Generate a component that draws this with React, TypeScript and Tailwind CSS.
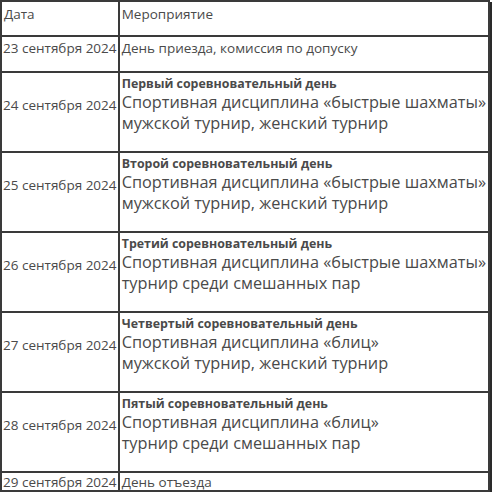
const ROWS = [
  { date: "24 сентября 2024", title: "Первый соревновательный день", line1: "Спортивная дисциплина «быстрые шахматы»", line2: "мужской турнир, женский турнир" },
  { date: "25 сентября 2024", title: "Второй соревновательный день", line1: "Спортивная дисциплина «быстрые шахматы»", line2: "мужской турнир, женский турнир" },
  { date: "26 сентября 2024", title: "Третий соревновательный день", line1: "Спортивная дисциплина «быстрые шахматы»", line2: "турнир среди смешанных пар" },
  { date: "27 сентября 2024", title: "Четвертый соревновательный день", line1: "Спортивная дисциплина «блиц»", line2: "мужской турнир, женский турнир" },
  { date: "28 сентября 2024", title: "Пятый соревновательный день", line1: "Спортивная дисциплина «блиц»", line2: "турнир среди смешанных пар" },
];

export default function App() {
  return (
    <div className="w-[492px] h-[492px] bg-white overflow-hidden text-[#4a4a4a]" style={{ fontFamily: '"Open Sans", sans-serif' }}>
      <table className="w-[490px] border-collapse border-t border-l border-[#8a8a8a] shadow-[2px_2px_0_#2a2a2a]">
        <tbody>
          <tr className="h-[35px]">
            <td className="w-[118px] border-2 border-[#3a3a3a] align-top px-[2px] pt-[4px] text-[13.5px] leading-[16px]">Дата</td>
            <td className="border-2 border-[#3a3a3a] align-top px-[2px] pt-[4px] text-[13.5px] leading-[16px]">Мероприятие</td>
          </tr>
          <tr className="h-[36px]">
            <td className="border-2 border-[#3a3a3a] align-top px-[1px] pt-[3px] text-[13.5px] leading-[16px] whitespace-nowrap">23 сентября 2024</td>
            <td className="border-2 border-[#3a3a3a] align-top px-[2px] pt-[3px] text-[13.5px] leading-[16px]">День приезда, комиссия по допуску</td>
          </tr>
          {ROWS.map((r) => (
            <tr key={r.date} className="h-[80px]">
              <td className="border-2 border-[#3a3a3a] align-middle px-[1px] pb-[14px] text-[13.5px] leading-[16px] whitespace-nowrap">{r.date}</td>
              <td className="border-2 border-[#3a3a3a] align-middle px-[2px] pb-[14px]">
                <div className="text-[12.4px] leading-[16px] font-bold">{r.title}</div>
                <div className="text-[16.3px] leading-[21px] whitespace-nowrap">{r.line1}</div>
                <div className="text-[16.3px] leading-[21px] whitespace-nowrap">{r.line2}</div>
              </td>
            </tr>
          ))}
          <tr className="h-[19px]">
            <td className="border-2 border-[#3a3a3a] align-middle px-[1px] text-[13.5px] leading-[16px] whitespace-nowrap">29 сентября 2024</td>
            <td className="border-2 border-[#3a3a3a] align-middle px-[2px] text-[13.5px] leading-[16px]">День отъезда</td>
          </tr>
        </tbody>
      </table>
    </div>
  );
}
